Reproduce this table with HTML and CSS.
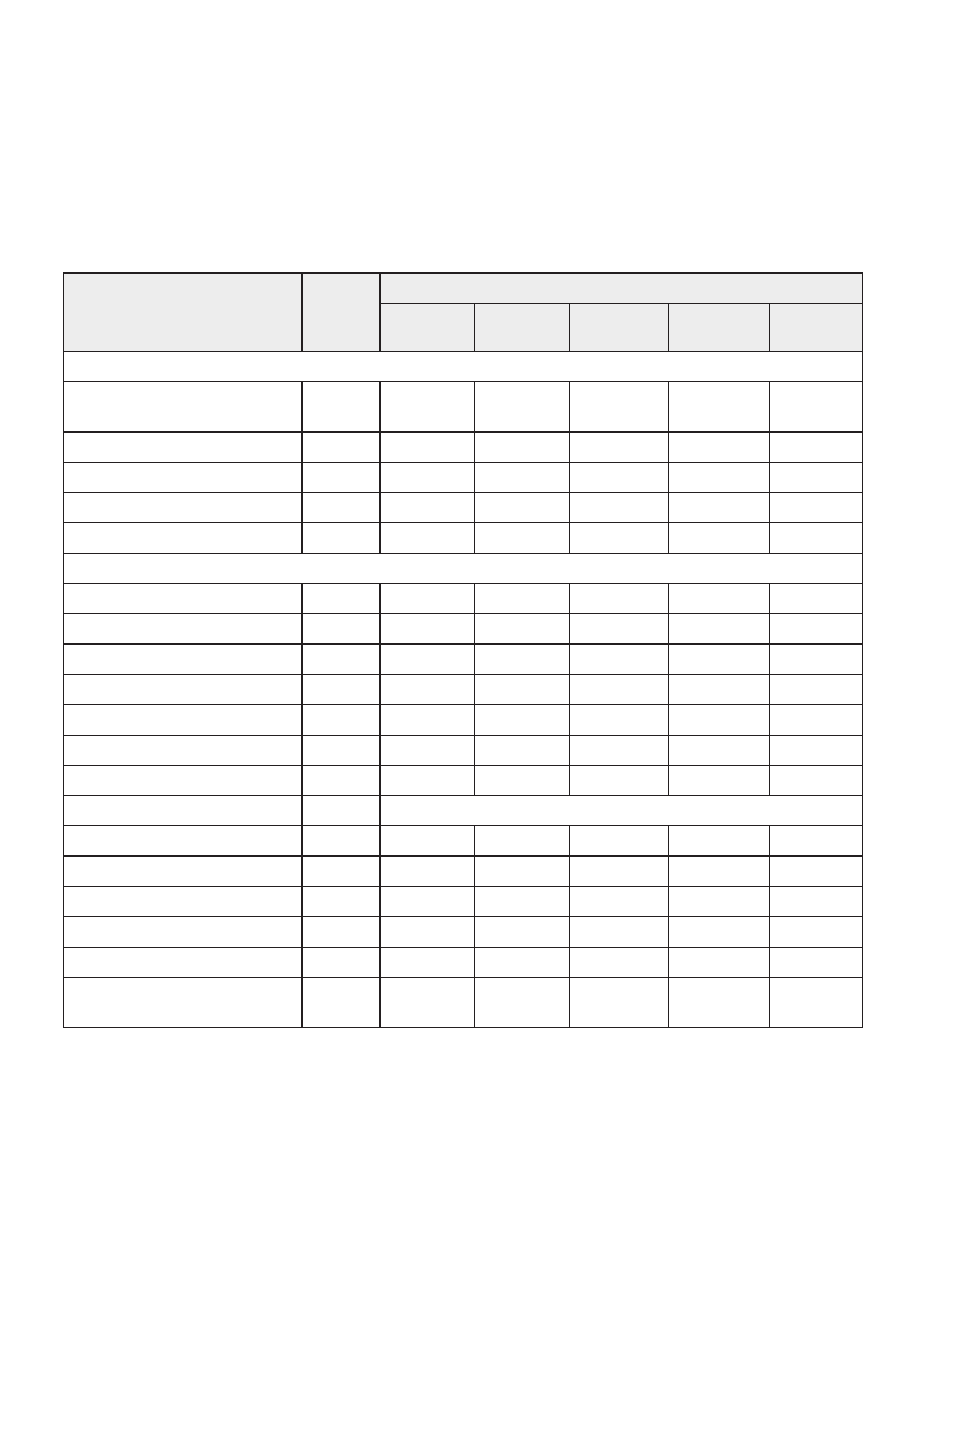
FILE: index.html
```html
<!DOCTYPE html>
<html lang="en">
<head>
<meta charset="utf-8">
<title>Table</title>
<link rel="stylesheet" href="styles.css">
</head>
<body>
<main class="page">
<table class="grid">
  <colgroup>
    <col class="w1"><col class="w2"><col class="w3"><col class="w4"><col class="w5"><col class="w6"><col class="w7">
  </colgroup>
  <thead>
    <tr class="h32">
      <th class="c1 top" rowspan="2"></th>
      <th class="c2 top" rowspan="2"></th>
      <th class="top" colspan="5"></th>
    </tr>
    <tr class="h48">
      <th></th><th></th><th></th><th></th><th></th>
    </tr>
  </thead>
  <tbody>
    <tr class="h30"><td class="sec" colspan="7"></td></tr>
    <tr class="h51 thick"><td class="c1"></td><td class="c2"></td><td></td><td></td><td></td><td></td><td></td></tr>
    <tr class="h30"><td class="c1"></td><td class="c2"></td><td></td><td></td><td></td><td></td><td></td></tr>
    <tr class="h30"><td class="c1"></td><td class="c2"></td><td></td><td></td><td></td><td></td><td></td></tr>
    <tr class="h30"><td class="c1"></td><td class="c2"></td><td></td><td></td><td></td><td></td><td></td></tr>
    <tr class="h31"><td class="c1"></td><td class="c2"></td><td></td><td></td><td></td><td></td><td></td></tr>
    <tr class="h30"><td class="sec" colspan="7"></td></tr>
    <tr class="h30"><td class="c1"></td><td class="c2"></td><td></td><td></td><td></td><td></td><td></td></tr>
    <tr class="h31 thick"><td class="c1"></td><td class="c2"></td><td></td><td></td><td></td><td></td><td></td></tr>
    <tr class="h30"><td class="c1"></td><td class="c2"></td><td></td><td></td><td></td><td></td><td></td></tr>
    <tr class="h30"><td class="c1"></td><td class="c2"></td><td></td><td></td><td></td><td></td><td></td></tr>
    <tr class="h31"><td class="c1"></td><td class="c2"></td><td></td><td></td><td></td><td></td><td></td></tr>
    <tr class="h30"><td class="c1"></td><td class="c2"></td><td></td><td></td><td></td><td></td><td></td></tr>
    <tr class="h30"><td class="c1"></td><td class="c2"></td><td></td><td></td><td></td><td></td><td></td></tr>
    <tr class="h30"><td class="c1"></td><td class="c2"></td><td colspan="5"></td></tr>
    <tr class="h31 thick"><td class="c1"></td><td class="c2"></td><td></td><td></td><td></td><td></td><td></td></tr>
    <tr class="h30"><td class="c1"></td><td class="c2"></td><td></td><td></td><td></td><td></td><td></td></tr>
    <tr class="h30"><td class="c1"></td><td class="c2"></td><td></td><td></td><td></td><td></td><td></td></tr>
    <tr class="h31"><td class="c1"></td><td class="c2"></td><td></td><td></td><td></td><td></td><td></td></tr>
    <tr class="h30"><td class="c1"></td><td class="c2"></td><td></td><td></td><td></td><td></td><td></td></tr>
    <tr class="h50"><td class="c1"></td><td class="c2"></td><td></td><td></td><td></td><td></td><td></td></tr>
  </tbody>
</table>
</main>
</body>
</html>
```

FILE: styles.css
```css
html, body {
  margin: 0;
  padding: 0;
  background: #ffffff;
  font-family: "Liberation Sans", Arial, sans-serif;
}

.page {
  padding: 272px 0 0 63px;
}

.grid {
  border-collapse: separate;
  border-spacing: 0;
  table-layout: fixed;
  width: 800px;
}

.w1 { width: 240px; }
.w2 { width: 78px; }
.w3 { width: 94px; }
.w4 { width: 95px; }
.w5 { width: 99px; }
.w6 { width: 101px; }
.w7 { width: 93px; }

.grid th,
.grid td {
  box-sizing: border-box;
  padding: 0;
  border-right: 1px solid #231f20;
  border-bottom: 1px solid #231f20;
}

.grid th {
  background: #ededed;
}

.grid .top {
  border-top: 2px solid #231f20;
}

.grid .c1 {
  border-left: 1px solid #231f20;
  border-right-width: 2px;
}

.grid .c2 {
  border-right-width: 2px;
}

.grid .sec {
  border-left: 1px solid #231f20;
}

.grid .thick td {
  border-bottom-width: 2px;
}

.h30 { height: 30px; }
.h31 { height: 31px; }
.h32 { height: 32px; }
.h48 { height: 48px; }
.h50 { height: 50px; }
.h51 { height: 51px; }
```
